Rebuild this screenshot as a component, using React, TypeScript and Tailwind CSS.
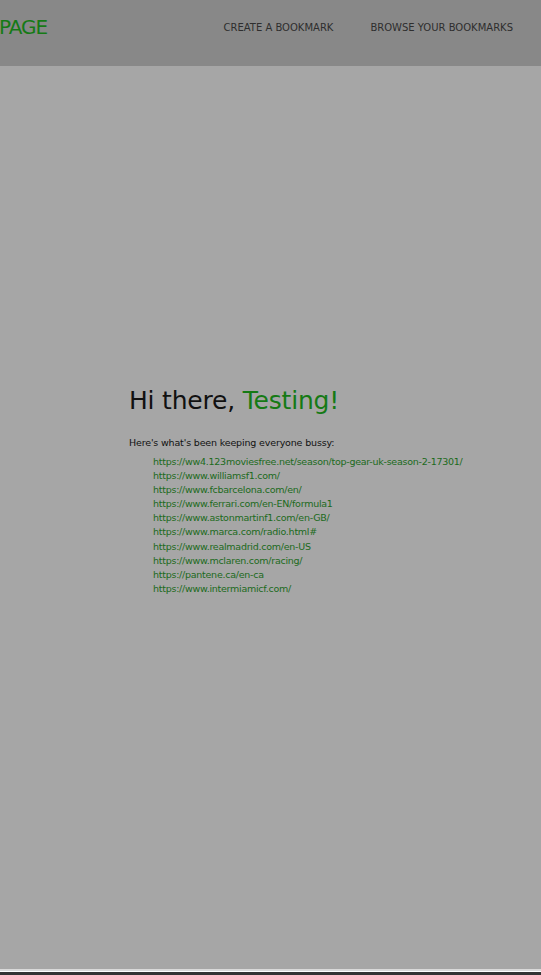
const links = [
  'https://ww4.123moviesfree.net/season/top-gear-uk-season-2-17301/',
  'https://www.williamsf1.com/',
  'https://www.fcbarcelona.com/en/',
  'https://www.ferrari.com/en-EN/formula1',
  'https://www.astonmartinf1.com/en-GB/',
  'https://www.marca.com/radio.html#',
  'https://www.realmadrid.com/en-US',
  'https://www.mclaren.com/racing/',
  'https://pantene.ca/en-ca',
  'https://www.intermiamicf.com/',
];

export default function App() {
  return (
    <div className="min-h-screen flex flex-col bg-[#353535] font-['DejaVu_Sans',sans-serif] overflow-hidden">
      <header className="h-[66px] shrink-0 bg-[#888888] flex items-center justify-between pb-[12px] overflow-hidden">
        <span className="text-[20px] text-[#157a15] -ml-[1px] tracking-[-1px]">PAGE</span>
        <nav className="flex items-center gap-[37px] pr-[28px] text-[10px] text-[#2e2e2e]">
          <a>CREATE A BOOKMARK</a>
          <a>BROWSE YOUR BOOKMARKS</a>
        </nav>
      </header>
      <main className="h-[903px] shrink-0 bg-[#a6a6a6] pl-[129px] pt-[319px]">
        <h1 className="text-[25px] leading-[32px] text-[#111111] tracking-[-0.2px]">
          Hi there, <span className="text-[#157a15]">Testing!</span>
        </h1>
        <p className="mt-[19px] text-[9.5px] leading-[14px] text-[#111111] tracking-[-0.16px]">Here's what's been keeping everyone bussy:</p>
        <ul className="mt-[5px] pl-[24px] text-[9.5px] leading-[14.1px] text-[#1b6a1b] tracking-[-0.26px]">
          {links.map((l) => (
            <li key={l}>
              <a href="#">{l}</a>
            </li>
          ))}
        </ul>
      </main>
      <div className="h-[2px] bg-[#d9d9d9]" />
      <div className="h-px bg-white" />
    </div>
  );
}
